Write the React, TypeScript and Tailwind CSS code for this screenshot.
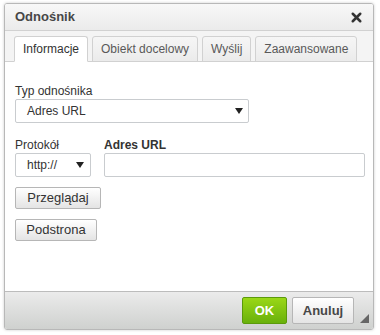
import { X } from "lucide-react";

const tabs = ["Informacje", "Obiekt docelowy", "Wyślij", "Zaawansowane"];

function Arrow() {
	return (
		<svg width="8" height="6" viewBox="0 0 8 6" className="shrink-0">
			<path d="M0 0h8L4 6z" fill="#222" />
		</svg>
	);
}

function SmallButton({ label, width }: { label: string; width: string }) {
	return (
		<button
			type="button"
			className={`${width} h-[22px] rounded-[2px] border border-[#b6b6b6] bg-gradient-to-b from-white to-[#e4e4e4] text-[13px] text-[#333]`}
		>
			{label}
		</button>
	);
}

export default function App() {
	return (
		<div
			className="h-[335px] w-[380px] overflow-hidden bg-white pt-[3px] pl-[4px]"
			style={{ fontFamily: '"Liberation Sans", Arial, sans-serif' }}
		>
			<div className="flex h-[327px] w-[370px] flex-col overflow-hidden rounded-[3px] border border-[#b8b8b8] shadow-[0_0_3px_rgba(0,0,0,0.2)]">
				{/* Title */}
				<div className="flex h-[27px] shrink-0 items-center justify-between border-b border-[#d1d1d1] bg-gradient-to-b from-[#f8f8f8] to-[#ebebeb] pr-[9px] pl-[10px]">
					<span className="font-bold text-[#474747] text-[13px]">Odnośnik</span>
					<X size={15} strokeWidth={4} className="text-[#333]" />
				</div>

				{/* Tabs */}
				<div className="flex h-[31px] shrink-0 items-end gap-[4px] border-b border-[#d1d1d1] bg-[#f4f4f4] pl-[9px]">
					{tabs.map((t, i) => (
						<div
							key={t}
							className={`-mb-px flex h-[26px] items-center rounded-t-[3px] border border-[#d1d1d1] px-[8px] text-[12px] ${
								i === 0
									? "border-b-white bg-white text-[#333]"
									: "bg-gradient-to-b from-[#f6f6f6] to-[#ebebeb] text-[#595959]"
							}`}
						>
							{t}
						</div>
					))}
				</div>

				{/* Content */}
				<div className="flex flex-1 flex-col bg-white px-[10px] pt-[22px] text-[#333] text-[12px]">
					<div className="leading-[14px]">Typ odnośnika</div>
					<div className="mt-px flex h-[24px] w-[234px] items-center justify-between rounded-[2px] border border-[#c9cccf] bg-white pr-[5px] pl-[11px]">
						<span>Adres URL</span>
						<Arrow />
					</div>

					<div className="mt-[15px] flex gap-[13px]">
						<div className="flex flex-col">
							<div className="leading-[14px]">Protokół</div>
							<div className="mt-px flex h-[24px] w-[76px] items-center justify-between rounded-[2px] border border-[#c9cccf] bg-white pr-[6px] pl-[11px]">
								<span>http://</span>
								<Arrow />
							</div>
						</div>
						<div className="flex flex-1 flex-col">
							<div className="font-bold leading-[14px]">Adres URL</div>
							<div className="mt-px h-[24px] w-[261px] rounded-[2px] border border-[#c9cccf] bg-white" />
						</div>
					</div>

					<div className="mt-[10px]">
						<SmallButton label="Przeglądaj" width="w-[86px]" />
					</div>
					<div className="mt-[10px]">
						<SmallButton label="Podstrona" width="w-[82px]" />
					</div>
				</div>

				{/* Footer */}
				<div className="relative flex h-[38px] shrink-0 items-center justify-end gap-[5px] border-t border-[#bcbcbc] bg-gradient-to-b from-[#ebebeb] to-[#cfd1cf] pr-[19px]">
					<button
						type="button"
						className="h-[27px] w-[45px] rounded-[2px] border border-[#5b9a0b] bg-gradient-to-b from-[#9ad717] to-[#69b10b] font-bold text-[13px] text-white"
					>
						OK
					</button>
					<button
						type="button"
						className="h-[27px] w-[62px] rounded-[2px] border border-[#b6b6b6] bg-gradient-to-b from-white to-[#e4e4e4] font-bold text-[#474747] text-[13px]"
					>
						Anuluj
					</button>
					<svg
						width="9"
						height="9"
						viewBox="0 0 9 9"
						className="absolute right-[4px] bottom-[6px]"
					>
						<path d="M9 0V9H0z" fill="#666" />
					</svg>
				</div>
			</div>
		</div>
	);
}
